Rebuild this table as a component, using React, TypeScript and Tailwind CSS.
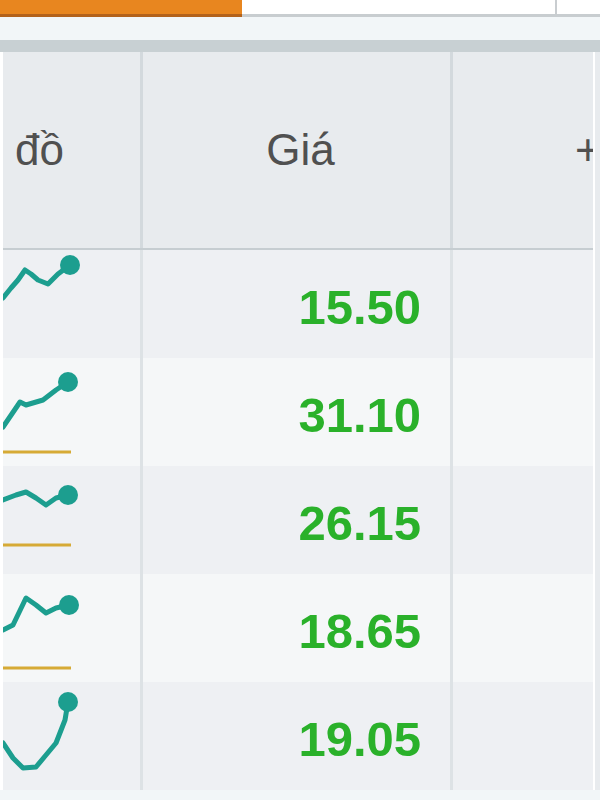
const rows = [
  {
    price: '15.50',
    points: '0,48 8,38 15,30 22,20 28,24 35,30 45,34 55,24 67,15',
    dot: [67, 15],
    ref: null as number | null,
  },
  {
    price: '31.10',
    points: '0,69 17,44 23,47 40,42 53,32 65,24',
    dot: [65, 24],
    ref: 94,
  },
  {
    price: '26.15',
    points: '0,34 13,29 23,26 33,32 43,39 53,32 65,29',
    dot: [65, 29],
    ref: 79,
  },
  {
    price: '18.65',
    points: '0,56 10,51 23,24 33,31 43,39 53,34 66,31',
    dot: [66, 31],
    ref: 94,
  },
  {
    price: '19.05',
    points: '0,61 10,76 20,86 33,85 43,73 53,61 62,38 65,20',
    dot: [65, 20],
    ref: null as number | null,
  },
];

function Spark({ points, dot, refY }: { points: string; dot: number[]; refY: number | null }) {
  return (
    <svg width="90" height="108" viewBox="0 0 90 108" className="block">
      {refY !== null && <line x1="0" y1={refY} x2="68" y2={refY} stroke="#d6aa35" strokeWidth="3" />}
      <polyline points={points} fill="none" stroke="#1c9e8f" strokeWidth="5" strokeLinejoin="round" strokeLinecap="round" />
      <circle cx={dot[0]} cy={dot[1]} r="10" fill="#1c9e8f" />
    </svg>
  );
}

export default function App() {
  return (
    <div className="h-[800px] w-[600px] overflow-hidden bg-[#f2f6f8] font-['Liberation_Sans',Arial,sans-serif]">
      <div className="flex h-[17px]">
        <div className="w-[242px] border-b-[3px] border-[#b3621b] bg-[#e8861f]" />
        <div className="relative flex-1 border-b-[3px] border-[#c8cdd0] bg-white">
          <div className="absolute left-[313px] top-0 h-full w-[2px] bg-[#c9cdd0]" />
        </div>
      </div>
      <div className="h-[23px] bg-[#f2f6f8]" />
      <div className="h-[12px] bg-[#c8d0d3]" />

      <div className="flex">
        <div className="w-[3px] shrink-0 bg-white" />
        <div className="w-[590px] shrink-0">
          <div className="grid h-[198px] grid-cols-[140px_310px_140px] border-b-2 border-[#c6cdd1] bg-[#e8ebee]">
            <div className="flex items-center justify-end overflow-hidden border-r-[3px] border-[#d3d9dd] pr-[76px] text-[44px] text-[#505050]">
              <span className="whitespace-nowrap">Biểu đồ</span>
            </div>
            <div className="flex items-center justify-center border-r-[3px] border-[#d3d9dd] pl-[8px] text-[44px] text-[#505050]">
              Giá
            </div>
            <div className="flex items-center overflow-hidden pl-[122px] text-[44px] text-[#505050]">
              <span className="whitespace-nowrap">+/-</span>
            </div>
          </div>

          {rows.map((r, i) => (
            <div
              key={r.price}
              className={`grid h-[108px] grid-cols-[140px_310px_140px] ${i % 2 === 0 ? 'bg-[#eef0f3]' : 'bg-[#f5f7f8]'}`}
            >
              <div className="flex items-center overflow-hidden border-r-[3px] border-[#dde2e5]">
                <Spark points={r.points} dot={r.dot} refY={r.ref} />
              </div>
              <div className="flex items-center justify-end border-r-[3px] border-[#dde2e5] pr-[29px] pt-[8px] text-[49px] font-bold text-[#2ab12a]">
                {r.price}
              </div>
              <div />
            </div>
          ))}
        </div>
        <div className="w-[2px] shrink-0 bg-white" />
        <div className="flex-1 bg-[#e8ebee]" />
      </div>
    </div>
  );
}
